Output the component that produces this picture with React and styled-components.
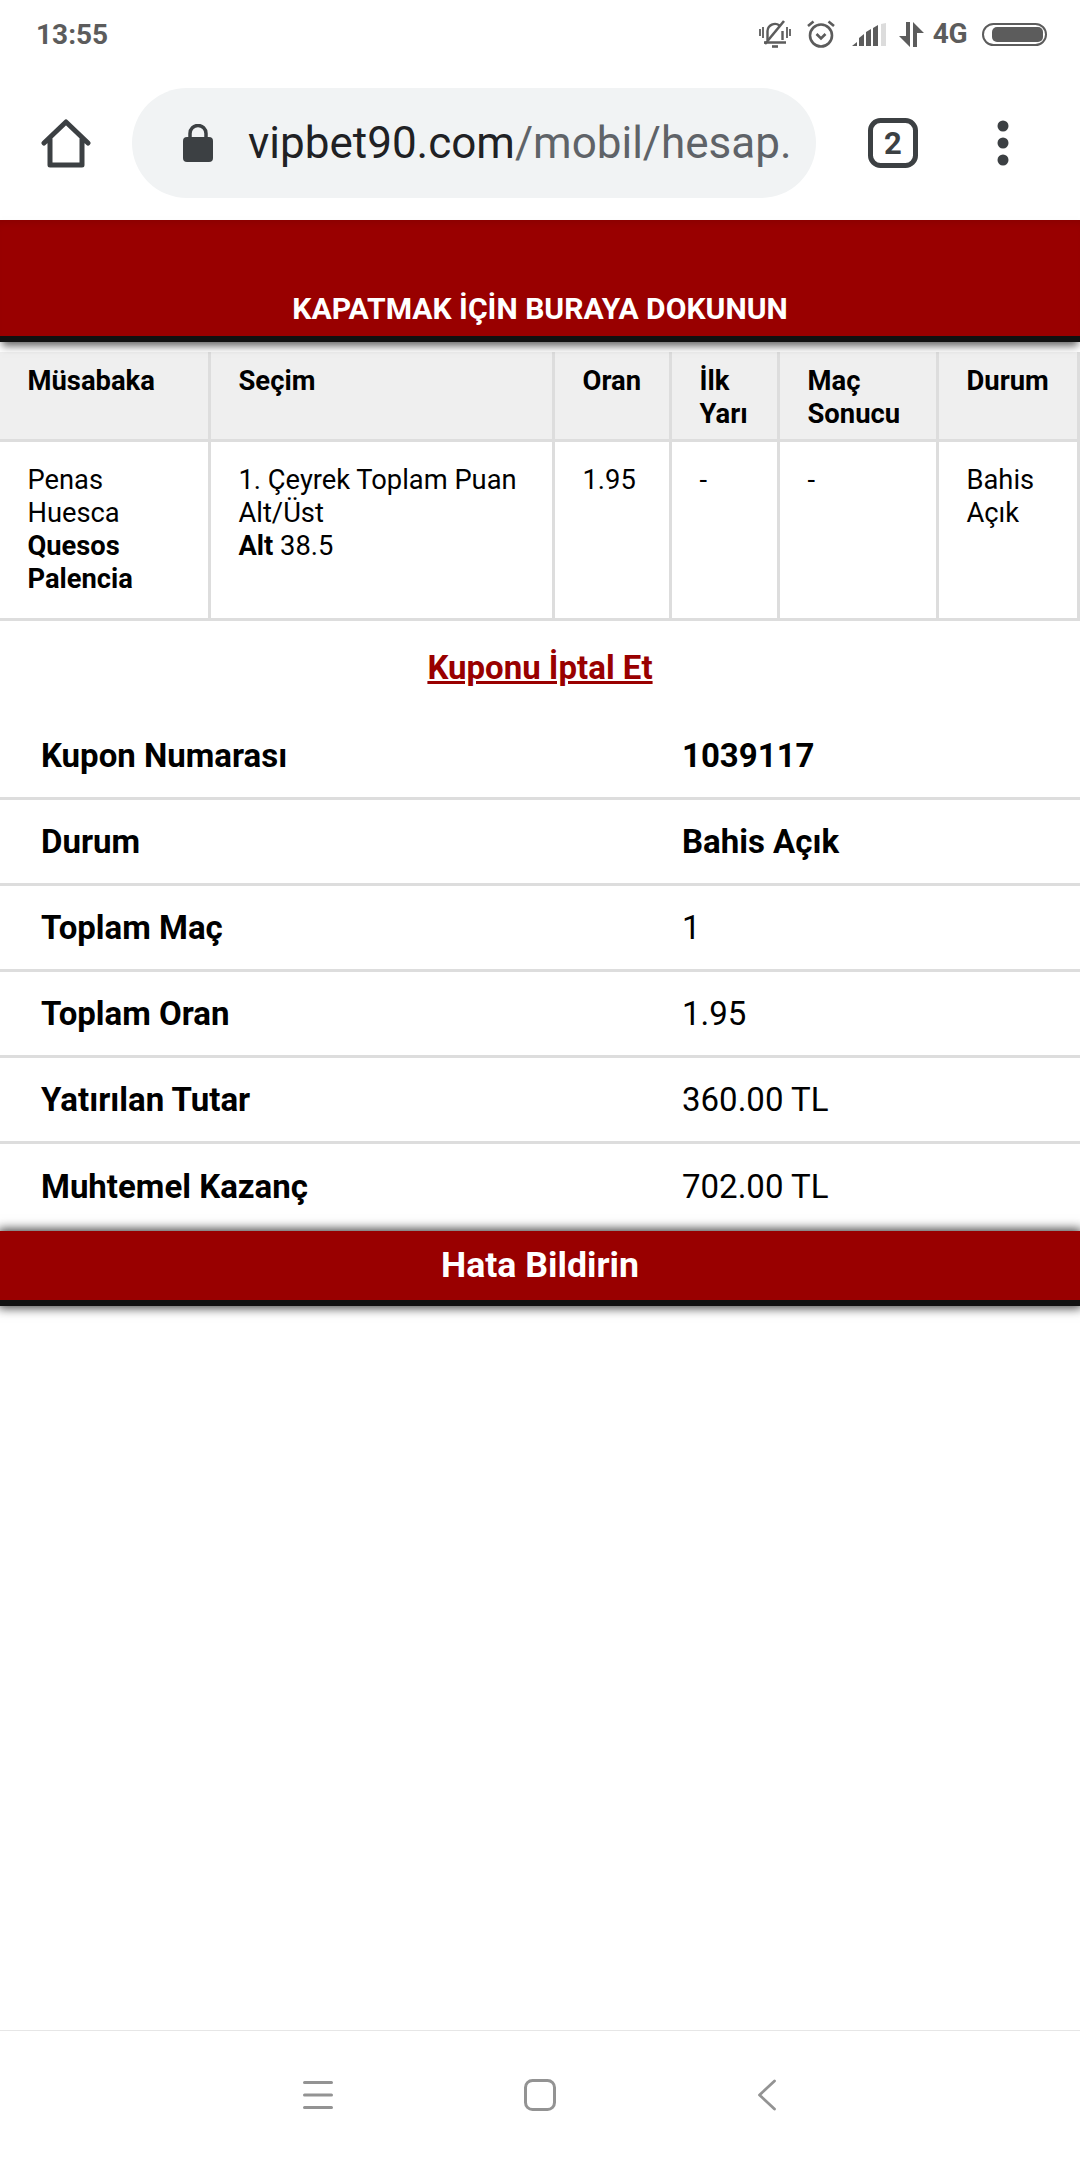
import React from 'react';
import styled, { createGlobalStyle } from 'styled-components';

const GlobalStyle = createGlobalStyle`
  html, body {
    margin: 0;
    padding: 0;
    background: #fff;
    font-family: Roboto, "Noto Sans", sans-serif;
  }
`;

const Page = styled.div`
  width: 1080px;
  height: 2160px;
  display: flex;
  flex-direction: column;
  overflow: hidden;
  background: #fff;
`;

const StatusBar = styled.div`
  height: 68px;
  flex: none;
  display: flex;
  align-items: center;
  justify-content: space-between;
  padding: 0 33px 0 36px;
  color: #5c5c5c;
`;

const Clock = styled.span`
  font-size: 28px;
  font-weight: 700;
`;

const StatusIcons = styled.div`
  display: flex;
  align-items: center;
`;

const StatusItem = styled.div`
  display: flex;
  margin-left: ${p => p.$gap || 0}px;
`;

const NetLabel = styled.span`
  font-size: 28px;
  line-height: 28px;
  font-weight: 700;
  letter-spacing: -0.5px;
`;

const Toolbar = styled.div`
  height: 152px;
  flex: none;
  display: flex;
  align-items: flex-start;
  padding-top: 20px;
  box-sizing: border-box;
`;

const ToolSlot = styled.div`
  width: ${p => p.$w}px;
  height: 110px;
  flex: none;
  display: flex;
  align-items: center;
  justify-content: center;
`;

const UrlPill = styled.div`
  width: 684px;
  height: 110px;
  flex: none;
  border-radius: 55px;
  background: #f1f3f4;
  display: flex;
  align-items: center;
  padding-left: 51px;
  box-sizing: border-box;
  gap: 35px;
`;

const UrlText = styled.div`
  font-size: 44px;
  color: #5f6368;
  white-space: nowrap;
  overflow: hidden;
  width: 546px;

  b {
    font-weight: 400;
    color: #202124;
  }
`;

const CloseBar = styled.div`
  height: 122px;
  flex: none;
  box-sizing: border-box;
  background: #990000;
  border-bottom: 6px solid #111;
  box-shadow: 0 6px 8px -2px rgba(0, 0, 0, 0.6), inset 0 8px 8px -6px rgba(0, 0, 0, 0.12);
  color: #fff;
  font-size: 30.1px;
  font-weight: 700;
  text-align: center;
  padding-top: 71px;
  line-height: 36px;
  position: relative;
`;

const Bets = styled.table`
  width: 1080px;
  margin-top: 10px;
  flex: none;
  table-layout: fixed;
  border-collapse: separate;
  border-spacing: 0;
`;

const Head = styled.th`
  background: #efefef;
  border-right: 3px solid #ddd;
  border-bottom: 3px solid #ddd;
  padding: 13px 28px 0 27.5px;
  height: 90px;
  box-sizing: border-box;
  font-size: 27.4px;
  line-height: 33px;
  font-weight: 700;
  text-align: left;
  vertical-align: top;
  color: #000;
`;

const Cell = styled.td`
  border-right: 3px solid #ddd;
  border-bottom: 3px solid #ddd;
  padding: 22px 0 22px 27.5px;
  height: 179px;
  box-sizing: border-box;
  font-size: 27.3px;
  line-height: 33px;
  vertical-align: top;
  color: #000;

  b {
    font-weight: 700;
  }
`;

const NameCell = styled(Cell)`
  padding-right: 28px;
`;

const CancelLink = styled.a`
  display: block;
  margin-top: 26px;
  text-align: center;
  font-size: 33px;
  line-height: 42px;
  font-weight: 700;
  color: #990000;
  text-decoration: underline;
  height: 67px;
`;

const Summary = styled.div`
  flex: none;
`;

const SummaryRow = styled.div`
  display: grid;
  grid-template-columns: 641px 1fr;
  height: ${p => (p.$last ? 85 : 86)}px;
  box-sizing: border-box;
  padding-left: 41px;
  align-items: center;
  font-size: 33px;
  color: #000;
  border-bottom: ${p => (p.$last ? 'none' : '3px solid #ddd')};
`;

const RowLabel = styled.span`
  font-weight: 700;
`;

const RowValue = styled.span`
  font-weight: ${p => (p.$bold ? 700 : 400)};
`;

const ReportBar = styled.div`
  height: 75px;
  flex: none;
  box-sizing: border-box;
  margin-top: 2px;
  background: #990000;
  border-bottom: 6px solid #111;
  box-shadow: 0 0 10px 2px rgba(0, 0, 0, 0.75);
  color: #fff;
  font-size: 35.7px;
  font-weight: 700;
  line-height: 69px;
  text-align: center;
`;

const Spacer = styled.div`
  flex: 1;
`;

const NavBar = styled.div`
  height: 130px;
  flex: none;
  box-sizing: border-box;
  border-top: 1px solid #e6e6e6;
  display: flex;
  align-items: flex-start;
  padding: 48px 0 0 303px;
`;

const NavSlot = styled.div`
  display: flex;
  margin-left: ${p => p.$gap || 0}px;
`;

const Mute = () => (
  <svg width="32" height="28" viewBox="0 0 32 28" fill="none" stroke="#5c5c5c" strokeWidth="2.4">
    <path d="M8.5 20V11a7.5 7.5 0 0 1 12-5.500M23.500 11v9M5 22.500h22" />
    <path d="M13 26.500h6" strokeWidth="2.600" />
    <path d="M25 1 6 24" strokeWidth="2.600" />
    <path d="M1 9v7M4 7v11M28 7v11M31 9v7" strokeWidth="1.800" />
  </svg>
);

const Alarm = () => (
  <svg width="28" height="28" viewBox="0 0 28 28" fill="none" stroke="#5c5c5c" strokeWidth="2.600">
    <circle cx="14" cy="15.500" r="11" />
    <path d="M9.500 14l4.500 4.500 4.500-4.500" />
    <path d="M1 6 6.500 1.500M27 6 21.500 1.500" />
  </svg>
);

const Signal = () => (
  <svg width="34" height="23" viewBox="0 0 34 23">
    <path d="M0 23l5-4v4zM7 23v-8l5-4v12zM14 23V9l5-3v17zM21 23V5l5-3v21z" fill="#5c5c5c" />
    <path d="M29 23V1l5-1v23z" fill="#dcdcdc" />
  </svg>
);

const DataArrows = () => (
  <svg width="25" height="25" viewBox="0 0 25 25" fill="#5c5c5c">
    <path d="M7 0h4v25L0 14h7zM14 0l11 11h-7v14h-4z" />
  </svg>
);

const Battery = () => (
  <svg width="65" height="23" viewBox="0 0 65 23">
    <rect x="1" y="1" width="63" height="21" rx="10.500" fill="none" stroke="#5c5c5c" strokeWidth="2" />
    <rect x="10" y="4" width="51" height="15" rx="5" fill="#5c5c5c" />
  </svg>
);

const HomeIcon = () => (
  <svg width="50" height="49" viewBox="0 0 50 49" fill="none" stroke="#3c4043" strokeWidth="5" strokeLinejoin="round" strokeLinecap="round">
    <path d="M3 24 25 3l22 21M9 20v26h32V20" />
  </svg>
);

const LockIcon = () => (
  <svg width="30" height="38" viewBox="0 0 30 38">
    <rect x="0" y="13" width="30" height="25" rx="4" fill="#3c4043" />
    <path d="M7 14V9.500a8 8 0 0 1 16 0V14" fill="none" stroke="#3c4043" strokeWidth="3.500" />
  </svg>
);

const TabsIcon = () => (
  <svg width="50" height="50" viewBox="0 0 50 50">
    <rect x="2.500" y="2.500" width="45" height="45" rx="10" fill="none" stroke="#3c4043" strokeWidth="5" />
    <text x="25" y="36" textAnchor="middle" fontFamily="Roboto" fontWeight="700" fontSize="31" fill="#3c4043">2</text>
  </svg>
);

const DotsIcon = () => (
  <svg width="12" height="46" viewBox="0 0 12 46" fill="#3c4043">
    <circle cx="6" cy="6" r="5.500" />
    <circle cx="6" cy="23" r="5.500" />
    <circle cx="6" cy="40" r="5.500" />
  </svg>
);

const NavMenu = () => (
  <svg width="30" height="32" viewBox="0 0 30 32" stroke="#939393" strokeWidth="3" strokeLinecap="round">
    <path d="M1.500 3.500h27M1.500 16h27M1.500 28.500h27" />
  </svg>
);

const NavHome = () => (
  <svg width="32" height="32" viewBox="0 0 32 32" fill="none" stroke="#939393" strokeWidth="3">
    <rect x="1.500" y="1.500" width="29" height="29" rx="7" />
  </svg>
);

const NavBack = () => (
  <svg width="18" height="32" viewBox="0 0 18 32" fill="none" stroke="#939393" strokeWidth="2.800" strokeLinecap="round" strokeLinejoin="round">
    <path d="M16.500 2 1.500 16l15 14" />
  </svg>
);

const summary = [
  { label: 'Kupon Numarası', value: '1039117', bold: true },
  { label: 'Durum', value: 'Bahis Açık', bold: true },
  { label: 'Toplam Maç', value: '1' },
  { label: 'Toplam Oran', value: '1.95' },
  { label: 'Yatırılan Tutar', value: '360.00 TL' },
  { label: 'Muhtemel Kazanç', value: '702.00 TL' },
];

const App = () => {
  return (
    <Page>
      <GlobalStyle />
      <StatusBar>
        <Clock>13:55</Clock>
        <StatusIcons>
          <StatusItem><Mute /></StatusItem>
          <StatusItem $gap={16}><Alarm /></StatusItem>
          <StatusItem $gap={17}><Signal /></StatusItem>
          <StatusItem $gap={13}><DataArrows /></StatusItem>
          <StatusItem $gap={9}><NetLabel>4G</NetLabel></StatusItem>
          <StatusItem $gap={15}><Battery /></StatusItem>
        </StatusIcons>
      </StatusBar>
      <Toolbar>
        <ToolSlot $w={132}><HomeIcon /></ToolSlot>
        <UrlPill>
          <LockIcon />
          <UrlText><b>vipbet90.com</b>/mobil/hesap.</UrlText>
        </UrlPill>
        <ToolSlot $w={153}><TabsIcon /></ToolSlot>
        <ToolSlot $w={68}><DotsIcon /></ToolSlot>
      </Toolbar>
      <CloseBar>KAPATMAK İÇİN BURAYA DOKUNUN</CloseBar>
      <Bets>
        <colgroup>
          <col width="211" />
          <col width="344" />
          <col width="117" />
          <col width="108" />
          <col width="159" />
          <col width="141" />
        </colgroup>
        <thead>
          <tr>
            <Head>Müsabaka</Head>
            <Head>Seçim</Head>
            <Head>Oran</Head>
            <Head>İlk Yarı</Head>
            <Head>Maç Sonucu</Head>
            <Head>Durum</Head>
          </tr>
        </thead>
        <tbody>
          <tr>
            <NameCell>Penas Huesca <b>Quesos Palencia</b></NameCell>
            <Cell>1. Çeyrek Toplam Puan Alt/Üst<br /><b>Alt</b> 38.5</Cell>
            <Cell>1.95</Cell>
            <Cell>-</Cell>
            <Cell>-</Cell>
            <NameCell>Bahis Açık</NameCell>
          </tr>
        </tbody>
      </Bets>
      <CancelLink>Kuponu İptal Et</CancelLink>
      <Summary>
        {summary.map((row, i) => (
          <SummaryRow key={row.label} $last={i === summary.length - 1}>
            <RowLabel>{row.label}</RowLabel>
            <RowValue $bold={row.bold}>{row.value}</RowValue>
          </SummaryRow>
        ))}
      </Summary>
      <ReportBar>Hata Bildirin</ReportBar>
      <Spacer />
      <NavBar>
        <NavSlot><NavMenu /></NavSlot>
        <NavSlot $gap={191}><NavHome /></NavSlot>
        <NavSlot $gap={202}><NavBack /></NavSlot>
      </NavBar>
    </Page>
  );
};

export default App;
